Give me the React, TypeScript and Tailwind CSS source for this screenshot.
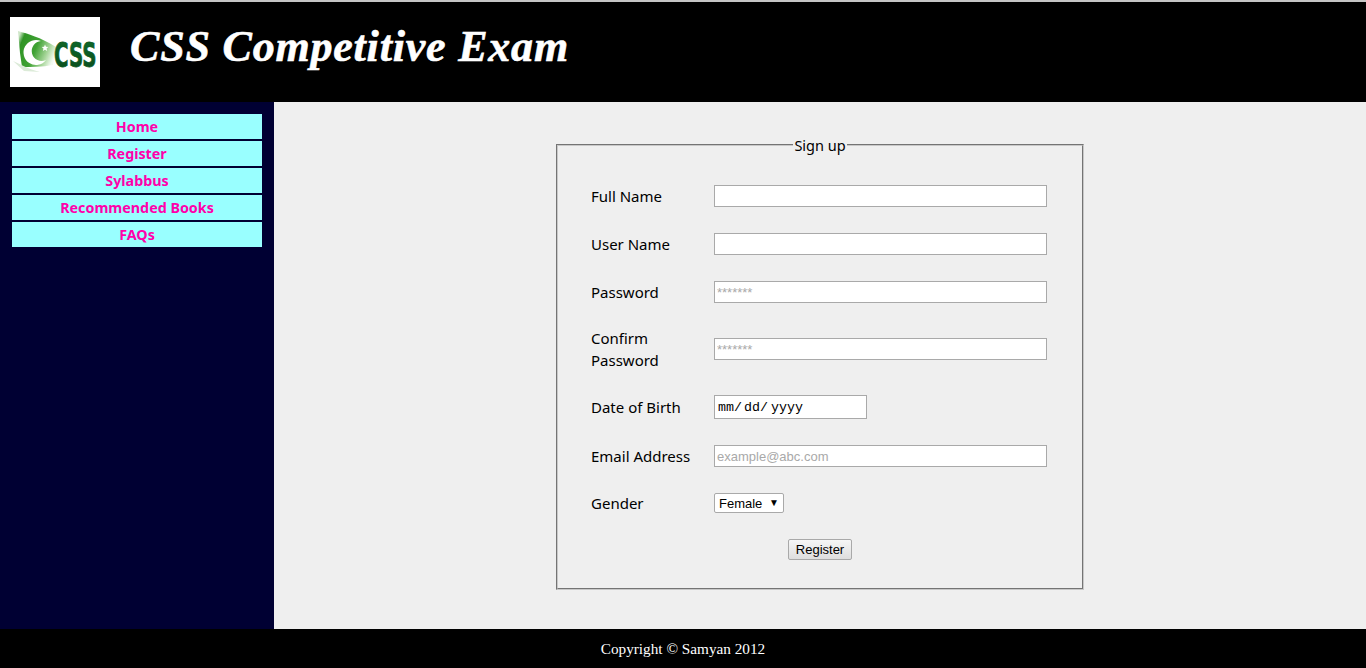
import React from "react";

const nav = ["Home", "Register", "Sylabbus", "Recommended Books", "FAQs"];
const inputCls =
  "block w-[333px] h-[22px] bg-white border border-[#a9a9a9] px-[2px] text-[13px] text-black outline-none placeholder:text-[#a9a9a9] font-['Liberation_Sans',sans-serif]";
const labelCls = "w-[123px] shrink-0 leading-[22px]";

function Logo() {
  return (
    <svg width="90" height="70" viewBox="0 0 90 70" className="block shrink-0 bg-white">
      <defs>
        <linearGradient id="flag" x1="0" y1="0.2" x2="1" y2="0.6">
          <stop offset="0" stopColor="#cfe6c8" />
          <stop offset="0.12" stopColor="#2f9426" />
          <stop offset="0.5" stopColor="#3fa233" />
          <stop offset="0.8" stopColor="#a9d79c" />
          <stop offset="1" stopColor="#f4faf2" />
        </linearGradient>
        <linearGradient id="letters" x1="0" y1="0" x2="0" y2="1">
          <stop offset="0" stopColor="#0f6a2a" />
          <stop offset="1" stopColor="#0a4a1c" />
        </linearGradient>
        <filter id="soft" x="-10%" y="-10%" width="120%" height="120%">
          <feGaussianBlur stdDeviation="0.7" />
        </filter>
      </defs>
      <g filter="url(#soft)">
        <path d="M8 14 C18 17 30 20 46 30 L43 48 C32 50 22 50 12 50 L10 36 Z" fill="url(#flag)" />
        <path d="M3 44 C10 47 18 52 30 55 L14 54 Z" fill="#dcebd8" />
      </g>
      <path d="M31 24 A12.5 12.5 0 1 0 36 43 A10 10 0 1 1 31 24 Z" fill="#ffffff" />
      <path d="M35 27.5 l1 2.3 2.4 .2 -1.8 1.6 .6 2.4 -2.2 -1.3 -2.1 1.3 .6 -2.4 -1.8 -1.6 2.4 -.2 Z" fill="#ffffff" />
      <text
        transform="translate(44 50) scale(0.6 1)"
        fontFamily="'DejaVu Sans', sans-serif"
        fontWeight="700"
        fontSize="33"
        fill="url(#letters)"
        stroke="#0c5a22"
        strokeWidth="0.8"
      >
        CSS
      </text>
    </svg>
  );
}

function Row({ label, className, children }: { label: React.ReactNode; className: string; children: React.ReactNode }) {
  return (
    <div className={`flex items-center ${className}`}>
      <div className={labelCls}>{label}</div>
      {children}
    </div>
  );
}

export default function App() {
  return (
    <div className="h-[668px] flex flex-col overflow-hidden bg-[#efefef] font-['Noto_Sans',sans-serif] text-[15px] text-black">
      <header className="h-[102px] shrink-0 bg-black border-t-2 border-[#c4c4c4] flex items-start pl-[10px] pt-[15px]">
        <Logo />
        <h1 className="ml-[30px] mt-[2px] text-white font-['Liberation_Serif',serif] italic font-bold text-[44px] leading-[56px] tracking-[0.8px] whitespace-nowrap [-webkit-text-stroke:0.6px_white]">
          CSS Competitive Exam
        </h1>
      </header>
      <div className="flex-1 flex min-h-0">
        <aside className="w-[274px] shrink-0 bg-[#000033] pt-[12px] px-[12px] flex flex-col gap-[2px]">
          {nav.map((n) => (
            <a key={n} className="block h-[25px] bg-[#99ffff] text-center text-[#ff00aa] font-['Noto_Sans',sans-serif] font-bold text-[14.3px] leading-[25px]">
              {n}
            </a>
          ))}
        </aside>
        <main className="flex-1 pl-[282px] pt-[42px]">
          <div className="relative w-[528px] h-[446px] border-2 [border-style:groove] border-[#c8c8c8] pl-[33px] pt-[39px]">
            <div className="absolute -top-[11px] left-0 right-0 flex justify-center">
              <span className="bg-[#efefef] px-[1px] text-[14.5px] leading-[20px]">Sign up</span>
            </div>
            <Row label="Full Name" className="h-[22px]">
              <input className={inputCls} />
            </Row>
            <Row label="User Name" className="h-[22px] mt-[26px]">
              <input className={inputCls} />
            </Row>
            <Row label="Password" className="h-[22px] mt-[26px]">
              <input className={inputCls} placeholder="*******" />
            </Row>
            <Row label={<span className="block leading-[22px] w-[80px]">Confirm Password</span>} className="h-[44px] mt-[24px]">
              <input className={inputCls} placeholder="*******" />
            </Row>
            <Row label="Date of Birth" className="h-[24px] mt-[24px]">
              <div className="flex w-[153px] h-[24px] bg-white border border-[#a9a9a9] pl-[3px] font-['Liberation_Mono',monospace] text-[13.33px] leading-[23px] whitespace-pre">
                <span>mm/</span>
                <span className="ml-[2px]">dd/</span>
                <span className="ml-[3px]">yyyy</span>
              </div>
            </Row>
            <Row label="Email Address" className="h-[22px] mt-[26px]">
              <input className={inputCls} placeholder="example@abc.com" />
            </Row>
            <Row label="Gender" className="h-[20px] mt-[26px]">
              <div className="relative w-[70px] h-[20px]">
                <select className="block appearance-none w-full h-full bg-white border border-[#a9a9a9] rounded-[2px] pl-[4px] text-[13px] font-['Liberation_Sans',sans-serif] outline-none">
                  <option>Female</option>
                </select>
                <span className="absolute right-[5px] top-[2px] text-[10px] leading-[14px] pointer-events-none">▼</span>
              </div>
            </Row>
            <div className="mt-[26px] pl-[197px]">
              <button className="block w-[64px] h-[21px] bg-gradient-to-b from-[#f6f6f6] to-[#dedede] border border-[#a9a9a9] rounded-[2px] text-[13px] font-['Liberation_Sans',sans-serif] leading-[18px]">
                Register
              </button>
            </div>
          </div>
        </main>
      </div>
      <footer className="h-[39px] shrink-0 bg-black text-white text-center font-['Liberation_Serif',serif] text-[15.25px] leading-[40px]">
        Copyright © Samyan 2012
      </footer>
    </div>
  );
}
